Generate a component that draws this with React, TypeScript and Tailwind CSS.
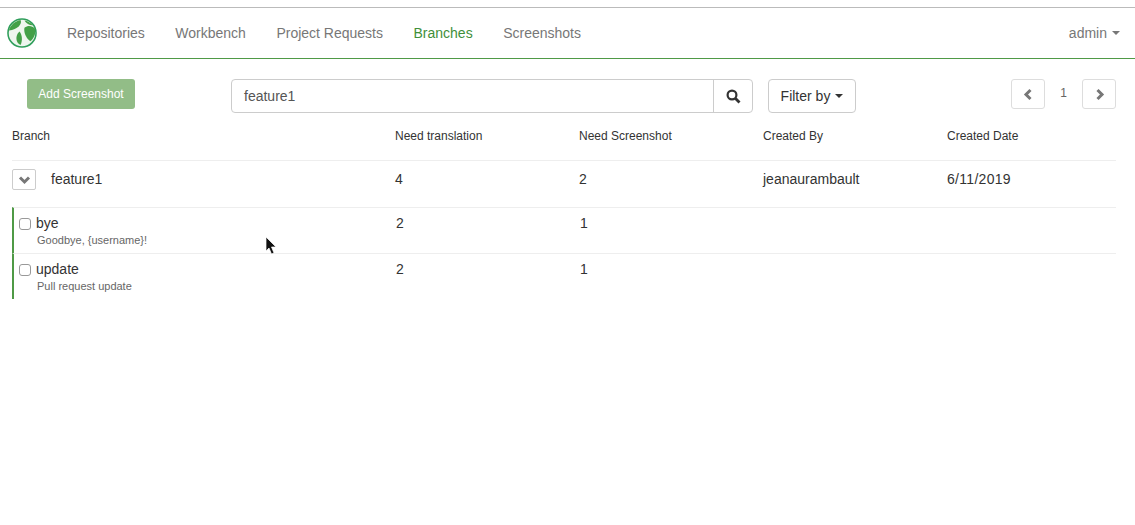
const font = { fontFamily: '"Liberation Sans", Arial, sans-serif' };

function Logo() {
  return (
    <svg width="30" height="30" viewBox="0 0 31 31" fill="none">
      <circle cx="15.5" cy="15.5" r="14.5" fill="#eef6ee" stroke="#2f9e5b" strokeWidth="1.6" />
      <path d="M2 13C3 8 8 3 14 2C16 6 11 12 2 13Z" fill="#43a047" />
      <path d="M18 2.5C21 3 25 5 27 7.500C24 8 20 6 18 2.500Z" fill="#43a047" />
      <path d="M18 10C22 7 26 8 29 11C30 16 28 21 24 24C20 21 17 15 18 10Z" fill="#43a047" />
      <path d="M13 14C16 18 16 24 14 28C9 26 8 18 13 14Z" fill="#43a047" />
    </svg>
  );
}

function SearchGlyph() {
  return (
    <svg width="15" height="15" viewBox="0 0 15 15" fill="none" stroke="#333">
      <circle cx="6" cy="6" r="4.4" strokeWidth="2.2" />
      <path d="M9.500 9.500L13.500 13.500" strokeWidth="2.800" />
    </svg>
  );
}

function Chevron({ dir }: { dir: 'left' | 'right' | 'down' }) {
  const d = dir === 'left' ? 'M9.500 3L5 7.500L9.500 12' : dir === 'right' ? 'M5.500 3L10 7.500L5.500 12' : 'M3 5.500L7.500 10L12 5.500';
  return (
    <svg width="15" height="15" viewBox="0 0 15 15" fill="none" stroke="#777" strokeWidth="3">
      <path d={d} />
    </svg>
  );
}

function NavLink({ label, active }: { label: string; active?: boolean }) {
  return <span className={active ? 'text-[#3f8f3a]' : 'text-[#777]'}>{label}</span>;
}

function Caret() {
  return <span className="ml-[5px] inline-block border-x-4 border-t-4 border-x-transparent border-t-current align-middle" />;
}

function Row({ name, desc }: { name: string; desc: string }) {
  return (
    <div className="mr-[19px] ml-[12px] flex h-[46px] border-t border-l-2 border-[#eee] border-l-[#4f9a46]">
      <div className="flex w-[382px] flex-col pl-[5px]">
        <div className="mt-[5px] flex items-center text-[14px] leading-[20px] text-[#333]">
          <input type="checkbox" className="mt-[2px] mr-[5px] h-[12px] w-[12px] appearance-none rounded-[3px] border border-[#999] bg-white" />
          {name}
        </div>
        <div className="ml-[18px] text-[11px] leading-[14px] text-[#666]">{desc}</div>
      </div>
      <div className="w-[184px] pt-[5px] text-[14px] leading-[20px] text-[#333]">2</div>
      <div className="pt-[5px] text-[14px] leading-[20px] text-[#333]">1</div>
    </div>
  );
}

export default function App() {
  return (
    <div style={font} className="h-[525px] w-[1135px] overflow-hidden bg-white">
      <div className="h-[8px] border-b border-[#bbb]" />
      <nav className="flex h-[51px] items-center border-b border-[#4f9a46] pr-[15px] pl-[7px] text-[14px]">
        <Logo />
        <div className="ml-[30px] flex gap-[30.500px]">
          <NavLink label="Repositories" />
          <NavLink label="Workbench" />
          <NavLink label="Project Requests" />
          <NavLink label="Branches" active />
          <NavLink label="Screenshots" />
        </div>
        <span className="ml-auto flex items-center text-[#777]">
          admin
          <Caret />
        </span>
      </nav>

      <div className="flex items-start pt-[20px] pr-[19px] pl-[27px]">
        <button className="h-[30px] w-[108px] rounded-[3px] bg-[#92bd87] text-[12px] text-white">Add Screenshot</button>
        <div className="ml-[96px] flex h-[34px] w-[522px] rounded-[4px] border border-[#ccc] text-[14px] text-[#555]">
          <div className="flex-1 pl-[12px] leading-[32px]">feature1</div>
          <div className="flex w-[39px] items-center justify-center border-l border-[#ccc]">
            <SearchGlyph />
          </div>
        </div>
        <button className="ml-[15px] flex h-[34px] w-[88px] items-center justify-center rounded-[4px] border border-[#ccc] text-[14px] text-[#333]">
          Filter by
          <Caret />
        </button>
        <div className="ml-auto flex items-start">
          <div className="flex h-[30px] w-[34px] items-center justify-center rounded-[3px] border border-[#ddd]">
            <Chevron dir="left" />
          </div>
          <div className="w-[37px] text-center text-[12px] leading-[28px] text-[#666]">1</div>
          <div className="flex h-[30px] w-[34px] items-center justify-center rounded-[3px] border border-[#ddd]">
            <Chevron dir="right" />
          </div>
        </div>
      </div>

      <div className="mt-[9px] flex h-[38px] pl-[12px] text-[12px] leading-[28px] text-[#333]">
        <div className="w-[383px]">Branch</div>
        <div className="w-[184px]">Need translation</div>
        <div className="w-[184px]">Need Screenshot</div>
        <div className="w-[184px]">Created By</div>
        <div>Created Date</div>
      </div>

      <div className="mr-[19px] ml-[12px] flex h-[47px] border-t border-[#eee] text-[14px] leading-[36px] text-[#333]">
        <div className="flex w-[383px] items-start">
          <div className="mt-[8px] flex h-[21px] w-[24px] items-center justify-center rounded-[2px] border border-[#ccc]">
            <Chevron dir="down" />
          </div>
          <span className="ml-[15px]">feature1</span>
        </div>
        <div className="w-[184px]">4</div>
        <div className="w-[184px]">2</div>
        <div className="w-[184px]">jeanaurambault</div>
        <div className="tracking-[0.300px]">6/11/2019</div>
      </div>

      <Row name="bye" desc="Goodbye, {username}!" />
      <Row name="update" desc="Pull request update" />

      <svg className="absolute top-[236px] left-[265px]" width="12" height="19" viewBox="0 0 12 19">
        <path d="M1 1V15L4 12L6.500 18L9 17L6.500 11H11Z" fill="#111" stroke="#fff" strokeWidth="0.700" />
      </svg>
    </div>
  );
}
